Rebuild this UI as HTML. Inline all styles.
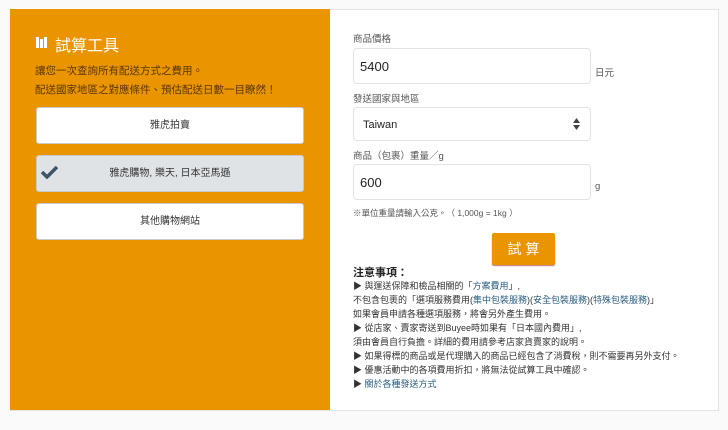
<!DOCTYPE html>
<html><head><meta charset="utf-8"><style>
body{margin:0;width:728px;height:430px;background:#fafafa;font-family:"Liberation Sans","Noto Sans CJK TC",sans-serif;position:relative;overflow:hidden}
.card{position:absolute;left:10px;top:9px;width:707px;height:400px;background:#fff;border:1px solid #e4e4e4}
.or{position:absolute;left:10px;top:9px;width:320px;height:401px;background:#ea9400}
.a{position:absolute}
.btn{position:absolute;left:36px;width:268px;height:37px;background:#fff;border:1px solid #c9c9c9;border-radius:3px;box-sizing:border-box;text-align:center;line-height:36px;font-size:10px;color:#333}
.inp{position:absolute;left:353px;width:238px;border:1px solid #e2e2e2;border-radius:4px;box-sizing:border-box;font-size:13px;color:#222;padding-left:6px}
.lbl{position:absolute;left:353px;font-size:9.5px;color:#555}
.n{position:absolute;left:353px;font-size:9px;color:#333;white-space:nowrap}
.b{color:#2a5d80}
</style></head><body>
<div class="card"></div>
<div class="or"></div>
<svg class="a" style="left:35px;top:35px" width="13" height="14" viewBox="0 0 13 14"><path d="M1 2h3v11H1zM5 1h3v12H5zM9 2h3v11H9z" fill="#fff"/><path d="M5 1h3v3H5z" fill="#ea9400"/></svg>
<div class="a" style="left:55px;top:32px;font-size:16px;color:#fff">試算工具</div>
<div class="a" style="left:35px;top:63px;font-size:10.5px;color:#5a3800">讓您一次查詢所有配送方式之費用。</div>
<div class="a" style="left:35px;top:82px;font-size:10.5px;color:#5a3800">配送國家地區之對應條件、預估配送日數一目瞭然！</div>
<div class="btn" style="top:107px">雅虎拍賣</div>
<div class="btn" style="top:155px;background:#dfe3e6">雅虎購物, 樂天, 日本亞馬遜</div>
<svg class="a" style="left:41px;top:165px" width="17" height="14" viewBox="0 0 17 14"><path d="M1 7l5 5L16 2" stroke="#3e5566" stroke-width="3.5" fill="none"/></svg>
<div class="btn" style="top:203px">其他購物網站</div>

<div class="lbl" style="top:31px">商品價格</div>
<div class="inp" style="top:48px;height:36px;line-height:36px">5400</div>
<div class="lbl" style="left:595px;top:65px">日元</div>
<div class="lbl" style="top:91px">發送國家與地區</div>
<div class="inp" style="top:107px;height:34px;line-height:34px;font-size:11px;padding-left:9px">Taiwan</div>
<svg class="a" style="left:572px;top:117px" width="9" height="14" viewBox="0 0 9 14"><path d="M4.5 1L8 6H1zM4.5 13L8 8H1z" fill="#444"/></svg>
<div class="lbl" style="top:148px">商品（包裹）重量／g</div>
<div class="inp" style="top:164px;height:36px;line-height:36px">600</div>
<div class="lbl" style="left:595px;top:181px">g</div>
<div class="lbl" style="top:207px;font-size:8.5px">※單位重量請輸入公克。（ 1,000g = 1kg ）</div>
<div class="a" style="left:492px;top:233px;width:63px;height:32px;background:#ea9400;border-radius:2px;color:#fff;font-size:14px;text-align:center;line-height:32px;box-shadow:0 1px 1px #b77">試 算</div>
<div class="n" style="top:264px;font-size:11px;font-weight:bold;color:#222">注意事項：</div>
<div class="n" style="top:279px">▶ 與運送保障和檢品相關的「<span class="b">方案費用</span>」,</div>
<div class="n" style="top:293px">不包含包裹的「選項服務費用(<span class="b">集中包裝服務</span>)(<span class="b">安全包裝服務</span>)(<span class="b">特殊包裝服務</span>)」</div>
<div class="n" style="top:307px">如果會員申請各種選項服務，將會另外產生費用。</div>
<div class="n" style="top:321px">▶ 從店家、賣家寄送到Buyee時如果有「日本國內費用」,</div>
<div class="n" style="top:335px">須由會員自行負擔。詳細的費用請參考店家貨賣家的說明。</div>
<div class="n" style="top:349px">▶ 如果得標的商品或是代理購入的商品已經包含了消費稅，則不需要再另外支付。</div>
<div class="n" style="top:363px">▶ 優惠活動中的各項費用折扣，將無法從試算工具中確認。</div>
<div class="n" style="top:377px">▶ <span class="b">關於各種發送方式</span></div>
</body></html>
